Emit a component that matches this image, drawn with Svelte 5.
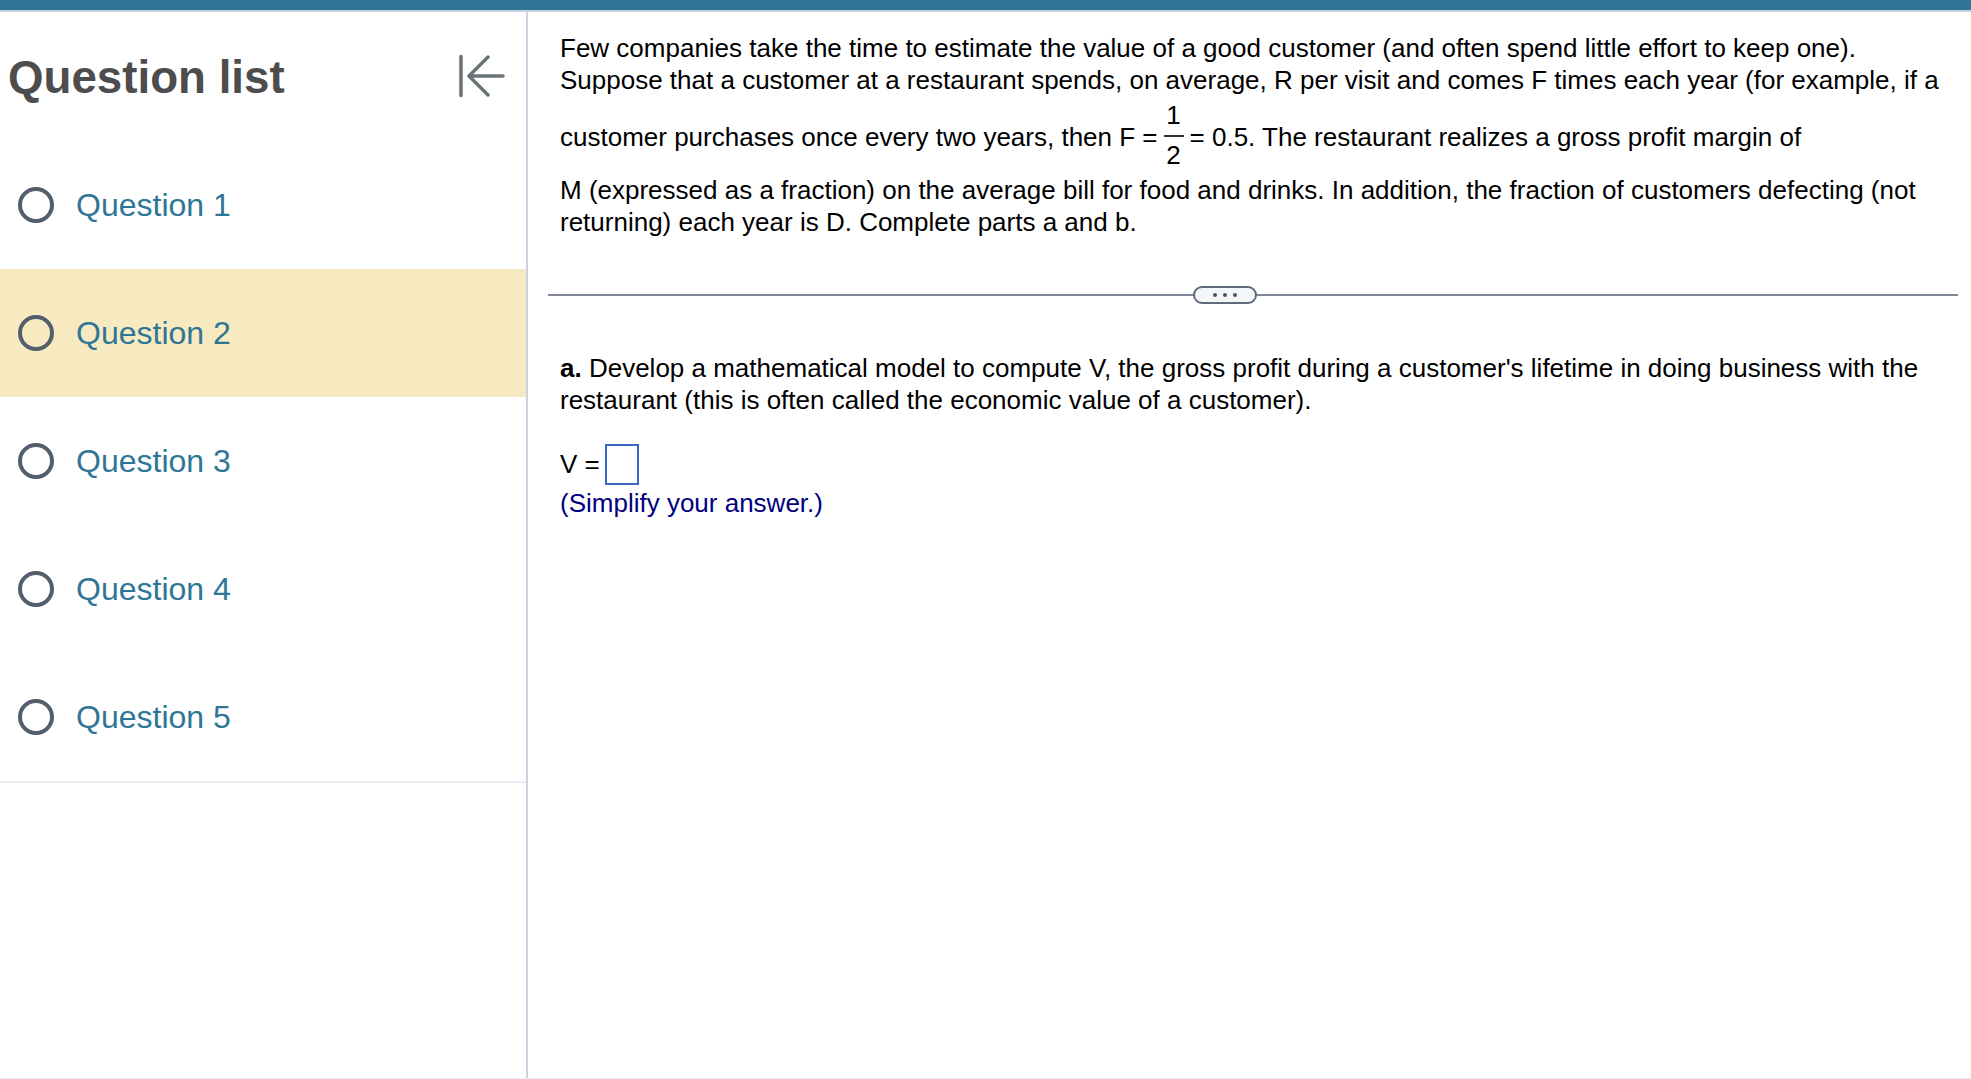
<script>
  const questions = ['Question 1', 'Question 2', 'Question 3', 'Question 4', 'Question 5'];
</script>

<div class="page">
  <div class="topbar"></div>
  <div class="main">
    <aside class="side">
      <header class="head">
        <h1>Question list</h1>
        <svg class="collapse" width="46" height="42" viewBox="0 0 46 42" fill="none" stroke="#6a7478" stroke-width="3.500" stroke-linecap="round" stroke-linejoin="round">
          <path d="M2 1.500V40.500" />
          <path d="M44 21H11" />
          <path d="M29 2L10 21L29 40" />
        </svg>
      </header>
      <ul>
        {#each questions as q, i}
          <li class:active={i === 1}><span class="radio"></span><span class="label">{q}</span></li>
        {/each}
      </ul>
    </aside>
    <main class="content">
      <div class="para">
        <p>Few companies take the time to estimate the value of a good customer (and often spend little effort to keep one).<br />Suppose that a customer at a restaurant spends, on average, R per visit and comes F times each year (for example, if a</p>
        <p class="fracline">customer purchases once every two years, then F =<span class="frac"><span class="num">1</span><span class="den">2</span></span>= 0.5. The restaurant realizes a gross profit margin of</p>
        <p>M (expressed as a fraction) on the average bill for food and drinks. In addition, the fraction of customers defecting (not<br />returning) each year is D. Complete parts a and b.</p>
      </div>
      <div class="divider"><span class="pill"><i></i><i></i><i></i></span></div>
      <p class="parta"><b>a.</b> Develop a mathematical model to compute V, the gross profit during a customer's lifetime in doing business with the<br />restaurant (this is often called the economic value of a customer).</p>
      <div class="answer"><span>V =</span><span class="box"></span></div>
      <p class="hint">(Simplify your answer.)</p>
    </main>
  </div>
</div>

<style>
  :global(body) { margin: 0; background: #fff; }
  .page { width: 1971px; height: 1079px; display: flex; flex-direction: column; overflow: hidden; font-family: "Liberation Sans", Arial, sans-serif; color: #000; }
  .topbar { height: 10px; background: #2f7696; border-bottom: 2px solid #ccd3e0; flex: none; }
  .main { flex: 1; display: flex; border-bottom: 1px solid #eceef2; }
  .side { width: 526px; flex: none; border-right: 2px solid #ccd2e0; }
  .head { height: 129px; display: flex; align-items: center; justify-content: space-between; padding: 2px 21px 0 8px; box-sizing: border-box; }
  h1 { margin: 0; font-size: 45.7px; font-weight: 700; color: #4d4d4d; line-height: 1; }
  .collapse { margin-top: -3px; }
  ul { list-style: none; margin: 0; padding: 0; border-bottom: 2px solid #ebecef; }
  li { height: 128px; display: flex; align-items: center; padding-left: 18px; box-sizing: border-box; }
  li.active { background: #f7eac1; }
  .radio { width: 36px; height: 36px; box-sizing: border-box; border: 4px solid #525e6c; border-radius: 50%; flex: none; }
  .label { margin-left: 22px; font-size: 32px; color: #2f7696; }
  .content { flex: 1; padding: 20px 13px 0 20px; min-width: 0; }
  .para { padding-left: 12px; font-size: 26px; line-height: 32px; }
  p { margin: 0; white-space: nowrap; }
  .fracline { display: flex; align-items: center; height: 78px; padding-top: 4px; box-sizing: border-box; }
  .frac { display: inline-flex; flex-direction: column; align-items: center; margin: 0 6px 6px 6px; }
  .num { border-bottom: 2px solid #333; width: 20px; text-align: center; line-height: 40px; }
  .den { width: 20px; text-align: center; line-height: 36px; }
  .divider { position: relative; height: 2px; background: #7f8799; margin-top: 56px; }
  .pill { position: absolute; left: 645px; top: -8px; width: 64px; height: 18px; box-sizing: border-box; border: 2px solid #5f6a7c; border-radius: 9px; background: #f5f6f8; display: flex; align-items: center; justify-content: center; gap: 6px; }
  .pill i { width: 4px; height: 4px; border-radius: 50%; background: #4a5566; }
  .parta { margin-top: 56px; padding-left: 12px; font-size: 26px; line-height: 32px; }
  .answer { display: flex; align-items: center; gap: 5px; margin-top: 28px; padding-left: 12px; font-size: 26px; }
  .box { width: 34px; height: 41px; box-sizing: border-box; border: 2px solid #3d68c4; }
  .hint { margin-top: 2px; padding-left: 12px; font-size: 26px; line-height: 32px; color: #000080; }
</style>
